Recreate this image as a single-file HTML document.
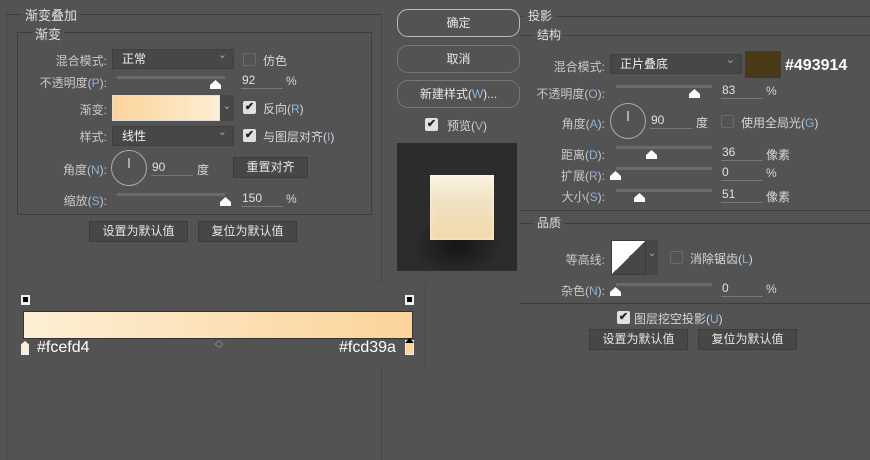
<!DOCTYPE html>
<html><head><meta charset="utf-8"><style>
*{margin:0;padding:0;box-sizing:border-box}
body{width:870px;height:460px;background:#535353;position:relative;overflow:hidden;font-family:"Liberation Sans","Noto Sans CJK SC",sans-serif;font-size:12px;color:#d6d6d6}
.a{position:absolute;white-space:nowrap}
.ln{position:absolute;background:#444}
.lh{position:absolute;height:1px;background:#3e3e3e}
.lv{position:absolute;width:1px;background:#464646}
.lbl{position:absolute;text-align:right;color:#c8c8c8;white-space:nowrap}
.dd{position:absolute;background:#474747;border:1px solid #3f3f3f;color:#eee;padding-left:9px;line-height:18px}
.dd:after{content:"⌄";position:absolute;right:6px;top:-4px;color:#aaa;font-size:11px}
.cb{position:absolute;width:13px;height:13px;border:1px solid #6a6a6a;border-radius:2px}
.cbk{position:absolute;width:13px;height:13px;background:#e0e0e0;border-radius:2px;color:#222;font-size:11px;line-height:13px;text-align:center;font-weight:bold}
.sl{position:absolute;height:3px;background:#6b6b6b}
.th{position:absolute;width:11px;height:9px;background:#fafafa;clip-path:polygon(50% 0,100% 55%,100% 100%,0 100%,0 55%)}
.val{position:absolute;color:#e0e0e0;border-bottom:1px solid #777;height:17px;line-height:16px;padding-left:1px}
.btn{position:absolute;background:#474747;border:1px solid #3c3c3c;text-align:center;color:#e6e6e6;line-height:19px}
.rb{position:absolute;border:1px solid #8a8a8a;border-radius:11px;text-align:center;color:#e6e6e6;line-height:26px}
.circ{position:absolute;border:1px solid #aaa;border-radius:50%}
.circ:after{content:"";position:absolute;left:50%;top:7px;width:2px;height:10px;margin-left:-1px;background:#aaa}
.bl{color:#8ab4e0}
</style></head><body>
<!-- left dialog -->
<div class="lv" style="left:6px;top:14px;height:446px"></div>
<div class="lh" style="left:6px;top:14px;width:376px"></div>
<div class="lv" style="left:381px;top:14px;height:446px"></div>
<div class="a" style="left:22px;top:5px;background:#535353;padding:0 3px;font-size:13px;color:#e0e0e0">渐变叠加</div>
<div class="a" style="left:17px;top:32px;width:355px;height:183px;border:1px solid #3e3e3e"></div>
<div class="a" style="left:32px;top:24px;background:#535353;padding:0 3px;font-size:13px;color:#e0e0e0">渐变</div>

<div class="lbl" style="right:763px;top:52px">混合模式:</div>
<div class="dd" style="left:112px;top:49px;width:122px;height:20px">正常</div>
<div class="cb" style="left:243px;top:53px"></div><div class="a" style="left:263px;top:52px">仿色</div>

<div class="lbl" style="right:763px;top:74px">不透明度(<span class="bl">P</span>):</div>
<div class="sl" style="left:117px;top:76px;width:108px"></div><div class="th" style="left:210px;top:80px"></div>
<div class="val" style="left:241px;top:72px;width:42px">92</div><div class="a" style="left:286px;top:74px">%</div>

<div class="lbl" style="right:763px;top:101px">渐变:</div>
<div class="a" style="left:112px;top:95px;width:108px;height:26px;background:linear-gradient(90deg,#fcd39a,#fcefd4);border:1px solid #ddd"></div>
<div class="a" style="left:220px;top:95px;width:14px;height:26px;background:#474747;color:#aaa;text-align:center;font-size:11px;line-height:22px">⌄</div>
<div class="cbk" style="left:243px;top:101px">✔</div><div class="a" style="left:263px;top:100px">反向(<span class="bl">R</span>)</div>

<div class="lbl" style="right:763px;top:128px">样式:</div>
<div class="dd" style="left:112px;top:126px;width:122px;height:20px">线性</div>
<div class="cbk" style="left:243px;top:129px">✔</div><div class="a" style="left:263px;top:128px">与图层对齐(<span class="bl">I</span>)</div>

<div class="lbl" style="right:763px;top:161px">角度(<span class="bl">N</span>):</div>
<div class="circ" style="left:111px;top:150px;width:36px;height:36px"></div>
<div class="val" style="left:151px;top:159px;width:42px">90</div><div class="a" style="left:197px;top:161px">度</div>
<div class="btn" style="left:233px;top:157px;width:75px;height:21px">重置对齐</div>

<div class="lbl" style="right:763px;top:192px">缩放(<span class="bl">S</span>):</div>
<div class="sl" style="left:117px;top:193px;width:108px"></div><div class="th" style="left:220px;top:197px"></div>
<div class="val" style="left:241px;top:190px;width:42px">150</div><div class="a" style="left:286px;top:192px">%</div>

<div class="btn" style="left:89px;top:221px;width:99px;height:21px">设置为默认值</div>
<div class="btn" style="left:198px;top:221px;width:99px;height:21px">复位为默认值</div>

<!-- gradient editor -->
<div class="a" style="left:6px;top:283px;width:420px;height:83px;background:#535353;border-left:1px solid #464646;border-right:1px solid #464646"></div>
<div class="a" style="left:21px;top:295px;width:9px;height:10px;background:#eee;border:2px solid #eee"><div style="background:#000;width:5px;height:5px"></div></div>
<div class="a" style="left:405px;top:295px;width:9px;height:10px;background:#eee;border:2px solid #eee"><div style="background:#000;width:5px;height:5px"></div></div>
<div class="a" style="left:23px;top:311px;width:390px;height:28px;background:linear-gradient(90deg,#fcefd4,#fcd39a);border:1px solid #333"></div>
<div class="a" style="left:21px;top:341px;width:8px;height:14px;background:#fcefd4;border:1px solid #eee;clip-path:polygon(50% 0,100% 25%,100% 100%,0 100%,0 25%)"></div>
<div class="a" style="left:405px;top:340px;width:9px;height:15px;background:#fcd39a;border:1px solid #eee"></div>
<div class="a" style="left:405px;top:338px;width:9px;height:5px;background:#000;clip-path:polygon(50% 0,100% 100%,0 100%)"></div>
<div class="a" style="left:215px;top:339px;font-size:8px;color:#ddd">◇</div>
<div class="a" style="left:37px;top:339px;font-size:16px;color:#fff">#fcefd4</div>
<div class="a" style="left:339px;top:339px;font-size:16px;color:#fff">#fcd39a</div>

<!-- middle -->
<div class="rb" style="left:397px;top:9px;width:123px;height:28px;border-color:#bbb">确定</div>
<div class="rb" style="left:397px;top:45px;width:123px;height:28px;border-color:#777">取消</div>
<div class="rb" style="left:397px;top:80px;width:123px;height:28px;border-color:#777">新建样式(<span class="bl">W</span>)...</div>
<div class="cbk" style="left:425px;top:118px">✔</div><div class="a" style="left:447px;top:117px">预览(<span class="bl">V</span>)</div>
<div class="a" style="left:397px;top:143px;width:120px;height:128px;background:radial-gradient(ellipse 45px 30px at 50% 80%,#151515,#2c2c2c)"></div>
<div class="a" style="left:430px;top:175px;width:64px;height:65px;background:linear-gradient(180deg,#fdf3df 0%,#f0e2c4 40%,#f2d9a8 100%);box-shadow:inset 0 0 6px rgba(255,255,255,.5)"></div>

<!-- right -->
<div class="lh" style="left:520px;top:16px;width:350px"></div>
<div class="a" style="left:525px;top:7px;background:#535353;padding:0 3px;color:#e0e0e0">投影</div>
<div class="lh" style="left:520px;top:35px;width:350px"></div>
<div class="a" style="left:534px;top:26px;background:#535353;padding:0 3px;color:#e0e0e0">结构</div>

<div class="lbl" style="right:265px;top:58px">混合模式:</div>
<div class="dd" style="left:610px;top:54px;width:132px;height:20px">正片叠底</div>
<div class="a" style="left:745px;top:51px;width:36px;height:27px;background:#493914;border:1px solid #3a3a3a"></div>
<div class="a" style="left:785px;top:57px;font-size:16px;font-weight:bold;color:#fff">#493914</div>

<div class="lbl" style="right:265px;top:85px">不透明度(<span class="bl">O</span>):</div>
<div class="sl" style="left:616px;top:85px;width:96px"></div><div class="th" style="left:689px;top:89px"></div>
<div class="val" style="left:721px;top:82px;width:42px">83</div><div class="a" style="left:766px;top:84px">%</div>

<div class="lbl" style="right:265px;top:115px">角度(<span class="bl">A</span>):</div>
<div class="circ" style="left:610px;top:103px;width:36px;height:36px"></div>
<div class="val" style="left:650px;top:112px;width:42px">90</div><div class="a" style="left:696px;top:114px">度</div>
<div class="cb" style="left:721px;top:115px"></div><div class="a" style="left:741px;top:114px">使用全局光(<span class="bl">G</span>)</div>

<div class="lbl" style="right:265px;top:146px">距离(<span class="bl">D</span>):</div>
<div class="sl" style="left:616px;top:146px;width:96px"></div><div class="th" style="left:646px;top:150px"></div>
<div class="val" style="left:721px;top:144px;width:42px">36</div><div class="a" style="left:766px;top:146px">像素</div>

<div class="lbl" style="right:265px;top:167px">扩展(<span class="bl">R</span>):</div>
<div class="sl" style="left:616px;top:167px;width:96px"></div><div class="th" style="left:610px;top:171px"></div>
<div class="val" style="left:721px;top:164px;width:42px">0</div><div class="a" style="left:766px;top:166px">%</div>

<div class="lbl" style="right:265px;top:188px">大小(<span class="bl">S</span>):</div>
<div class="sl" style="left:616px;top:189px;width:96px"></div><div class="th" style="left:634px;top:193px"></div>
<div class="val" style="left:721px;top:186px;width:42px">51</div><div class="a" style="left:766px;top:188px">像素</div>

<div class="lh" style="left:520px;top:210px;width:350px"></div>
<div class="lh" style="left:520px;top:223px;width:350px"></div>
<div class="a" style="left:534px;top:214px;background:#535353;padding:0 3px;color:#e0e0e0">品质</div>

<div class="lbl" style="right:265px;top:251px">等高线:</div>
<div class="a" style="left:611px;top:240px;width:35px;height:35px;background:linear-gradient(to top left,#474747 50%,#fff 50%);border:1px solid #3a3a3a"></div>
<div class="a" style="left:646px;top:240px;width:12px;height:35px;background:#474747;color:#aaa;font-size:10px;text-align:center;line-height:28px">⌄</div>
<div class="cb" style="left:670px;top:251px"></div><div class="a" style="left:690px;top:250px">消除锯齿(<span class="bl">L</span>)</div>

<div class="lbl" style="right:265px;top:282px">杂色(<span class="bl">N</span>):</div>
<div class="sl" style="left:616px;top:283px;width:96px"></div><div class="th" style="left:610px;top:287px"></div>
<div class="val" style="left:721px;top:280px;width:42px">0</div><div class="a" style="left:766px;top:282px">%</div>

<div class="lh" style="left:520px;top:303px;width:350px"></div>
<div class="cbk" style="left:617px;top:311px">✔</div><div class="a" style="left:634px;top:310px">图层挖空投影(<span class="bl">U</span>)</div>
<div class="btn" style="left:589px;top:329px;width:99px;height:21px">设置为默认值</div>
<div class="btn" style="left:698px;top:329px;width:99px;height:21px">复位为默认值</div>
</body></html>
